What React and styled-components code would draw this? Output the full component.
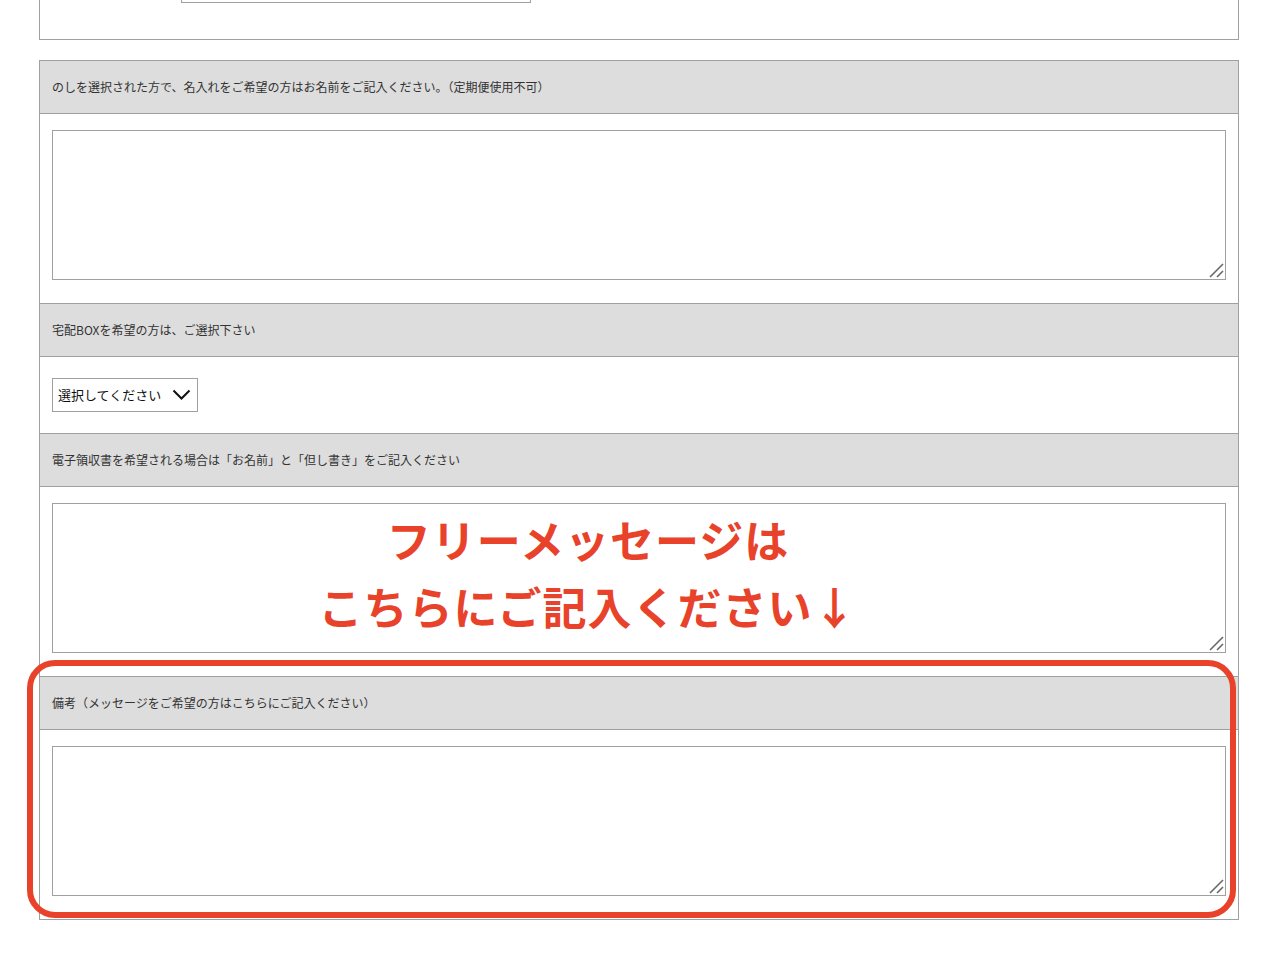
import styled, { createGlobalStyle } from "styled-components";

const GlobalStyle = createGlobalStyle`
  html, body {
    margin: 0;
    padding: 0;
    background: #fff;
    overflow: hidden;
  }
  body {
    font-family: "Noto Sans CJK JP", "Noto Sans", sans-serif;
    color: #333;
  }
`;

const Page = styled.div`
  width: 1200px;
  margin-left: 39px;
  margin-top: -50px;
`;

const TopBlock = styled.div`
  box-sizing: border-box;
  height: 90px;
  border: 1px solid #a0a0a0;
  padding: 19px 0 0 141px;
`;

const TopInput = styled.input`
  display: block;
  box-sizing: border-box;
  width: 350px;
  height: 33px;
  border: 1px solid #a0a0a0;
  outline: none;
`;

const FormTable = styled.div`
  margin-top: 20px;
  border: 1px solid #a0a0a0;
  border-top: none;
`;

const Section = styled.div`
  position: relative;
`;

const Label = styled.div`
  box-sizing: border-box;
  height: 54px;
  display: flex;
  align-items: center;
  padding: 0 12px 2px;
  background: #dddddd;
  border-top: 1px solid #a0a0a0;
  border-bottom: 1px solid #a0a0a0;
  font-size: 12px;
  color: #333;
`;

const Field = styled.div`
  position: relative;
  padding: ${(p) => (p.$compact ? "21px 12px" : "16px 12px 23px")};
`;

const TextArea = styled.textarea`
  display: block;
  box-sizing: border-box;
  width: 100%;
  height: 150px;
  border: 1px solid #a0a0a0;
  border-radius: 0;
  outline: none;
  resize: none;
  font-family: inherit;
`;

const Grip = styled.svg`
  position: absolute;
  right: 14px;
  bottom: 25px;
  pointer-events: none;
`;

const SelectWrap = styled.div`
  position: relative;
  display: inline-block;
`;

const Select = styled.select`
  display: block;
  box-sizing: border-box;
  width: 146px;
  height: 34px;
  padding: 0 30px 2px 5px;
  border: 1px solid #a0a0a0;
  border-radius: 0;
  background: #fff;
  appearance: none;
  font-family: "Noto Sans CJK JP", sans-serif;
  font-size: 13px;
  color: #111;
  outline: none;
`;

const Chevron = styled.svg`
  position: absolute;
  left: 120px;
  top: 11px;
  pointer-events: none;
`;

const Notice = styled.div`
  position: absolute;
  left: 0;
  top: 19px;
  width: 1096px;
  text-align: center;
  font-family: "Noto Sans CJK JP", sans-serif;
  font-weight: 700;
  font-size: 44px;
  line-height: 67px;
  color: #e8432a;
  letter-spacing: 1px;
  pointer-events: none;
`;

const Highlight = styled.div`
  position: absolute;
  left: -13px;
  right: 2px;
  top: -16px;
  bottom: 1px;
  border: 6px solid #e8432a;
  border-radius: 28px;
  pointer-events: none;
`;

const ResizeGrip = () => (
  <Grip width="15" height="15" viewBox="0 0 15 15">
    <path d="M1 14 L14 1 M8 14 L14 8" stroke="#6a6a6a" strokeWidth="1.6" fill="none" />
  </Grip>
);

export default function App() {
  return (
    <>
      <GlobalStyle />
      <Page>
        <TopBlock>
          <TopInput type="text" />
        </TopBlock>
        <FormTable>
          <Section>
            <Label>
              のしを選択された方で、名入れをご希望の方はお名前をご記入ください。（定期便使用不可）
            </Label>
            <Field>
              <TextArea />
              <ResizeGrip />
            </Field>
          </Section>
          <Section>
            <Label>宅配BOXを希望の方は、ご選択下さい</Label>
            <Field $compact>
              <SelectWrap>
                <Select defaultValue="">
                  <option value="">選択してください</option>
                  <option value="yes">希望する</option>
                  <option value="no">希望しない</option>
                </Select>
                <Chevron width="19" height="12" viewBox="0 0 19 12">
                  <path d="M1.5 1.5 L9.5 9.5 L17.5 1.5" fill="none" stroke="#111" strokeWidth="2" />
                </Chevron>
              </SelectWrap>
            </Field>
          </Section>
          <Section>
            <Label>電子領収書を希望される場合は「お名前」と「但し書き」をご記入ください</Label>
            <Field>
              <TextArea />
              <ResizeGrip />
              <Notice>
                フリーメッセージは
                <br />
                こちらにご記入ください↓
              </Notice>
            </Field>
          </Section>
          <Section>
            <Label>備考（メッセージをご希望の方はこちらにご記入ください）</Label>
            <Field>
              <TextArea />
              <ResizeGrip />
            </Field>
            <Highlight />
          </Section>
        </FormTable>
      </Page>
    </>
  );
}
